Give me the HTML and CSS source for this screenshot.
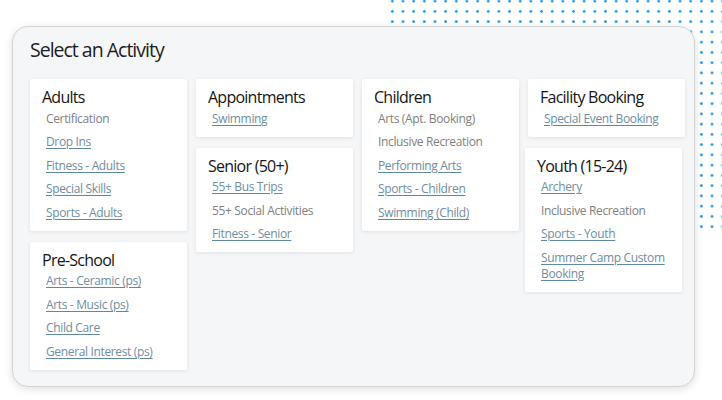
FILE: index.html
```html
<!DOCTYPE html>
<html lang="en">
<head>
<meta charset="utf-8">
<title>Select an Activity</title>
<link rel="stylesheet" href="styles.css">
</head>
<body>
<div class="dots"></div>
<div class="page">
  <section class="card">
    <h1 class="title">Select an Activity</h1>
    <div class="columns">
      <div class="col">
        <div class="tile">
          <h2 class="tile-head">Adults</h2>
          <span class="item plain">Certification</span>
          <a class="item link" href="#">Drop Ins</a>
          <a class="item link" href="#">Fitness - Adults</a>
          <a class="item link" href="#">Special Skills</a>
          <a class="item link" href="#">Sports - Adults</a>
        </div>
        <div class="tile">
          <h2 class="tile-head">Pre-School</h2>
          <a class="item link" href="#">Arts - Ceramic (ps)</a>
          <a class="item link" href="#">Arts - Music (ps)</a>
          <a class="item link" href="#">Child Care</a>
          <a class="item link" href="#">General Interest (ps)</a>
        </div>
      </div>
      <div class="col">
        <div class="tile">
          <h2 class="tile-head">Appointments</h2>
          <a class="item link" href="#">Swimming</a>
        </div>
        <div class="tile">
          <h2 class="tile-head">Senior (50+)</h2>
          <a class="item link" href="#">55+ Bus Trips</a>
          <span class="item plain">55+ Social Activities</span>
          <a class="item link" href="#">Fitness - Senior</a>
        </div>
      </div>
      <div class="col">
        <div class="tile">
          <h2 class="tile-head">Children</h2>
          <span class="item plain">Arts (Apt. Booking)</span>
          <span class="item plain">Inclusive Recreation</span>
          <a class="item link" href="#">Performing Arts</a>
          <a class="item link" href="#">Sports - Children</a>
          <a class="item link" href="#">Swimming (Child)</a>
        </div>
      </div>
      <div class="col">
        <div class="tile">
          <h2 class="tile-head">Facility Booking</h2>
          <a class="item link" href="#">Special Event Booking</a>
        </div>
        <div class="tile shifted">
          <h2 class="tile-head">Youth (15-24)</h2>
          <a class="item link" href="#">Archery</a>
          <span class="item plain">Inclusive Recreation</span>
          <a class="item link" href="#">Sports - Youth</a>
          <a class="item link" href="#">Summer Camp Custom Booking</a>
        </div>
      </div>
    </div>
  </section>
</div>
</body>
</html>
```
FILE: styles.css
```css
html, body {
  margin: 0;
  padding: 0;
  background: #ffffff;
  font-family: "Open Sans", "Noto Sans", sans-serif;
}

body {
  position: relative;
  width: 722px;
  height: 400px;
  overflow: hidden;
}

.dots {
  position: absolute;
  left: 387px;
  top: -4px;
  width: 335px;
  height: 236px;
  background-image: radial-gradient(circle at center, #1f97f2 0, #1f97f2 1px, rgba(31,151,242,0) 1.6px);
  background-size: 10.67px 10.26px;
  z-index: 0;
}

.page {
  position: relative;
  z-index: 1;
  padding: 26px 0 0 12px;
}

.card {
  box-sizing: border-box;
  width: 683px;
  height: 361px;
  background: #f5f6f8;
  border: 1px solid #d3d4d6;
  border-radius: 16px;
  box-shadow: 0 2px 8px rgba(0, 0, 0, 0.13);
  padding: 9px 8px 0 17px;
}

.title {
  margin: 0 0 15px 0;
  font-size: 19.5px;
  line-height: 28px;
  font-weight: 400;
  letter-spacing: -1px;
  color: #1d1d1f;
}

.columns {
  display: flex;
  gap: 9px;
  align-items: flex-start;
}

.col {
  width: 157px;
  display: flex;
  flex-direction: column;
  gap: 11px;
}

.tile {
  background: #ffffff;
  box-shadow: 0 1px 4px rgba(0, 0, 0, 0.09);
  border-radius: 2px;
  padding: 8px 10px 6px 12px;
  display: flex;
  flex-direction: column;
  align-items: flex-start;
}

.shifted {
  margin-left: -3px;
  margin-right: 3px;
}

.tile-head {
  margin: 0;
  font-size: 16px;
  line-height: 20px;
  font-weight: 400;
  letter-spacing: -0.75px;
  color: #151515;
}

.item {
  display: block;
  margin-left: 4px;
  font-size: 12px;
  line-height: 16px;
  letter-spacing: -0.35px;
  padding: 3.75px 0;
}

.plain {
  color: #808080;
}

.link {
  color: #6f8da2;
  text-decoration: underline;
  text-decoration-color: #5f88a2;
  text-underline-offset: 2px;
}
```
